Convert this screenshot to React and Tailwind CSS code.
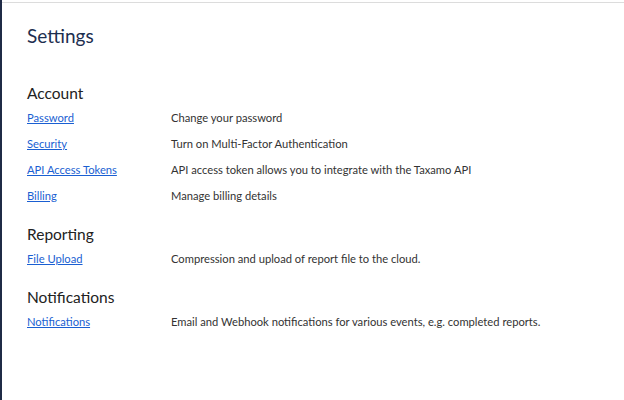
const SECTIONS = [
  {
    title: "Account",
    items: [
      { label: "Password", desc: "Change your password" },
      { label: "Security", desc: "Turn on Multi-Factor Authentication" },
      {
        label: "API Access Tokens",
        desc: "API access token allows you to integrate with the Taxamo API",
      },
      { label: "Billing", desc: "Manage billing details" },
    ],
  },
  {
    title: "Reporting",
    items: [
      {
        label: "File Upload",
        desc: "Compression and upload of report file to the cloud.",
      },
    ],
  },
  {
    title: "Notifications",
    items: [
      {
        label: "Notifications",
        desc: "Email and Webhook notifications for various events, e.g. completed reports.",
      },
    ],
  },
];

export default function App() {
  return (
    <div
      className="h-[400px] w-[624px] bg-white border-l-2 border-[#1f2b46] pt-[2px]"
      style={{ fontFamily: "Lato, 'Open Sans', sans-serif" }}
    >
      <div className="h-full border-t border-[#dcdcdc] px-[25px] pt-[19px]">
        <h1 className="text-[19px] leading-[28px] text-[#1d2e4f]">Settings</h1>

        <div className="mt-[32px] flex flex-col gap-[14px]">
          {SECTIONS.map((section) => (
            <section key={section.title}>
              <h2 className="text-[15.5px] leading-[22px] text-[#222]">
                {section.title}
              </h2>
              <div className="mt-[1px] flex flex-col">
                {section.items.map((item) => (
                  <div
                    key={item.label}
                    className="flex items-center h-[26px] text-[11.2px]"
                  >
                    <a
                      href="#"
                      className="w-[144px] shrink-0 text-[#1a5fd2] underline"
                    >
                      {item.label}
                    </a>
                    <span className="text-[#333]">{item.desc}</span>
                  </div>
                ))}
              </div>
            </section>
          ))}
        </div>
      </div>
    </div>
  );
}
